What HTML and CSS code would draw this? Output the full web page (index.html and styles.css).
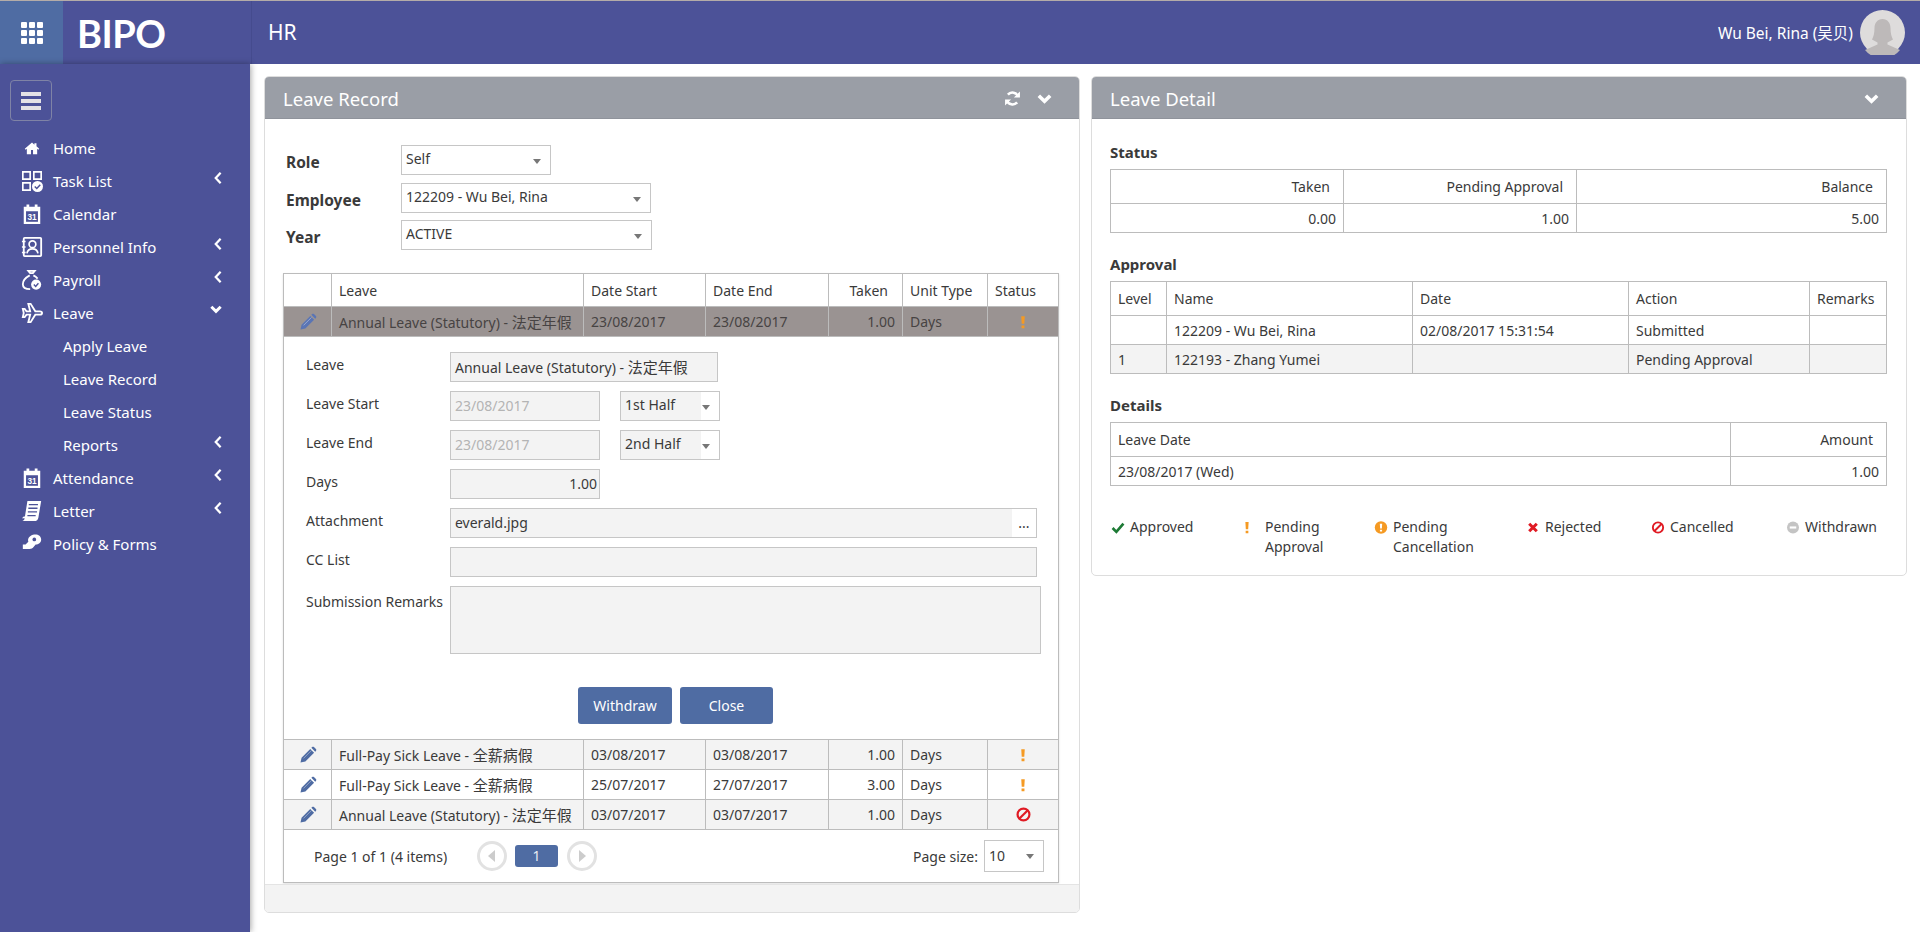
FILE: index.html
```html
<!DOCTYPE html>
<html lang="en">
<head>
    <meta charset="UTF-8">
    <meta name="viewport" content="width=device-width, initial-scale=1.0">
    <title>BIPO HR - Leave Record</title>
    <link rel="stylesheet" href="styles.css">
</head>
<body>
    <svg class="icon-defs" aria-hidden="true">
        <symbol id="i-pencil" viewBox="0 0 24 24"><path d="M2 22l1.400-6.500L15 3.900l5.100 5.100L8.500 20.600zM16.500 2.400l1-1c.7-.7 1.700-.7 2.400 0l2.700 2.700c.7.7.7 1.700 0 2.400l-1 1z"/><path class="pencil-line" d="M6 16.500L16.500 6"/></symbol>
        <symbol id="i-bang" viewBox="0 0 10 24"><path d="M2 2h6l-.8 13H2.800zM2.500 18h5v4.500h-5z"/></symbol>
        <symbol id="i-ban" viewBox="0 0 24 24"><circle cx="12" cy="12" r="9.500" fill="none" stroke="currentColor" stroke-width="3.500"/><path d="M5.500 18.500l13-13" stroke="currentColor" stroke-width="3.500"/></symbol>
        <symbol id="i-down" viewBox="0 0 24 24"><path d="M4 8l8 8 8-8" fill="none" stroke="currentColor" stroke-width="5"/></symbol>
        <symbol id="i-left" viewBox="0 0 12 24"><path d="M9.500 5L3 12l6.500 7" fill="none" stroke="currentColor" stroke-width="3"/></symbol>
    </svg>

    <header class="topbar">
        <div class="apps-btn">
            <svg width="22" height="22" viewBox="0 0 22 22" fill="#fff"><rect width="6" height="6" rx="1"/><rect x="8" width="6" height="6" rx="1"/><rect x="16" width="6" height="6" rx="1"/><rect y="8" width="6" height="6" rx="1"/><rect x="8" y="8" width="6" height="6" rx="1"/><rect x="16" y="8" width="6" height="6" rx="1"/><rect y="16" width="6" height="6" rx="1"/><rect x="8" y="16" width="6" height="6" rx="1"/><rect x="16" y="16" width="6" height="6" rx="1"/></svg>
        </div>
        <div class="logo">BIPO</div>
        <div class="module-name">HR</div>
        <div class="user-box">
            <span>Wu Bei, Rina (吴贝)</span>
            <svg class="avatar" width="45" height="45" viewBox="0 0 45 45"><circle cx="22.500" cy="22.500" r="22.500" fill="#dedcdc"/><path fill="#bdb9b9" d="M22.500 9c5 0 8 4 8 9 0 5 1 9 2.500 11.500l-5.500 3v2L40 40a22.500 22.500 0 0 1-35 0l12.500-5.500v-2l-5.500-3C13.500 27 14.500 23 14.500 18c0-5 3-9 8-9z"/></svg>
        </div>
    </header>

    <div class="layout">
        <aside class="sidebar">
            <button class="menu-toggle" type="button">
                <svg width="20" height="18" viewBox="0 0 20 18" fill="#e4e2e6"><rect width="20" height="4" y="0"/><rect width="20" height="4" y="7"/><rect width="20" height="4" y="14"/></svg>
            </button>
            <ul class="nav">
                <li><svg class="nav-icon" viewBox="-4 -4 32 32"><path fill="#fff" d="M12 4L1.500 13l1.300 1.500L4.500 13v8h6v-6h3v6h6v-8l1.700 1.500 1.300-1.500-4-3.400V5h-3v2.100z"/></svg>Home</li>
                <li><svg class="nav-icon" viewBox="0 0 24 24"><path fill="none" stroke="#fff" stroke-width="1.800" d="M2 2h8v8H2zM14 2h8v8h-8zM2 14h8v8H2z"/><circle cx="18" cy="18" r="6" fill="#fff"/><path fill="none" stroke="#4c5298" stroke-width="1.600" d="M15 18l2.200 2.200L21 16"/></svg>Task List<svg class="nav-caret"><use href="#i-left"/></svg></li>
                <li><svg class="nav-icon" viewBox="0 0 24 24"><path fill="#fff" d="M3 4h3V1.500h3V4h6V1.500h3V4h3v19H3z"/><rect x="5.500" y="9" width="13" height="11.500" fill="#4c5298"/><text x="12" y="18.500" class="cal-day">31</text></svg>Calendar</li>
                <li><svg class="nav-icon" viewBox="0 0 24 24"><rect x="3" y="2" width="19" height="20" rx="1" fill="none" stroke="#fff" stroke-width="2"/><path stroke="#fff" stroke-width="1.800" d="M1 6h4M1 12h4M1 18h4"/><circle cx="12.500" cy="9" r="3.700" fill="none" stroke="#fff" stroke-width="1.800"/><path fill="none" stroke="#fff" stroke-width="1.800" d="M6.500 19c.5-3.500 3-5 6-5s5.500 1.500 6 5"/></svg>Personnel Info<svg class="nav-caret"><use href="#i-left"/></svg></li>
                <li><svg class="nav-icon" viewBox="0 0 24 24"><path fill="none" stroke="#fff" stroke-width="2" d="M8 2l2 2.500h3l2-2.500zM9.500 7C5 9.500 2 13 2 16.500 2 20.500 5.500 22 10 22M13.500 7c2 1 3.500 2.200 4.600 3.500"/><circle cx="16.500" cy="17" r="5.500" fill="#fff"/><path fill="none" stroke="#4c5298" stroke-width="1.500" d="M14 17l2 2 3-3.500"/></svg>Payroll<svg class="nav-caret"><use href="#i-left"/></svg></li>
                <li><svg class="nav-icon" viewBox="0 0 24 24"><path fill="none" stroke="#fff" stroke-width="2" d="M23 12c0-1-1.200-1.800-2.400-1.800h-5L10.500 2H8l2 8.200H6L4 7.500H2l1 4.500-1 4.500h2l2-2.700h4L8 22h2.500l5.100-8.200h5c1.200 0 2.400-.8 2.400-1.800z"/></svg>Leave<svg class="nav-caret nav-caret-open"><use href="#i-down"/></svg></li>
                <li class="sub">Apply Leave</li>
                <li class="sub">Leave Record</li>
                <li class="sub">Leave Status</li>
                <li class="sub">Reports<svg class="nav-caret"><use href="#i-left"/></svg></li>
                <li><svg class="nav-icon" viewBox="0 0 24 24"><path fill="#fff" d="M3 4h3V1.500h3V4h6V1.500h3V4h3v19H3z"/><rect x="5.500" y="9" width="13" height="11.500" fill="#4c5298"/><text x="12" y="18.500" class="cal-day">31</text></svg>Attendance<svg class="nav-caret"><use href="#i-left"/></svg></li>
                <li><svg class="nav-icon" viewBox="0 0 24 24"><path fill="#fff" d="M7 1h15l-3 18c-.3 2.500-2 4-4.500 4H1.500c1.500-.5 2.300-1.600 2.500-3H1l2-2h1.300z"/><path stroke="#4c5298" stroke-width="1.500" d="M8.500 5h10M8 9h10M7.500 13h10M7 17h9"/></svg>Letter<svg class="nav-caret"><use href="#i-left"/></svg></li>
                <li><svg class="nav-icon" viewBox="0 0 24 24"><path fill="#fff" d="M13 2c4-1.500 9 .5 9 5 0 3.500-3 5.500-6 5.500l-3 3.500c-1.500 1.200-3 1.500-5 1.500H2v-5h3l3-3C7 6 9 3.500 13 2z"/><circle cx="14.500" cy="7" r="2" fill="#4c5298"/></svg>Policy &amp; Forms</li>
            </ul>
        </aside>

        <main class="content">
            <section class="panel">
                <div class="panel-head">
                    <h2>Leave Record</h2>
                    <svg class="head-icon" viewBox="0 0 24 24"><path fill="none" stroke="currentColor" stroke-width="3.500" d="M20 9.500A8.500 8.500 0 0 0 5.500 6.500M4 14.500a8.500 8.500 0 0 0 14.500 3"/><path fill="currentColor" d="M22.500 2v8.500H14zM1.500 22v-8.500H10z"/></svg>
                    <svg class="head-icon"><use href="#i-down"/></svg>
                </div>
                <div class="panel-body">
                    <div class="filter-form">
                        <div class="filter-row"><label>Role</label><div class="select select-role">Self</div></div>
                        <div class="filter-row"><label>Employee</label><div class="select select-emp">122209 - Wu Bei, Rina</div></div>
                        <div class="filter-row"><label>Year</label><div class="select select-year">ACTIVE</div></div>
                    </div>

                    <div class="grid">
                        <table class="grid-table">
                            <colgroup><col class="c-edit"><col class="c-leave"><col class="c-start"><col class="c-end"><col class="c-taken"><col class="c-unit"><col class="c-status"></colgroup>
                            <thead>
                                <tr><th></th><th>Leave</th><th>Date Start</th><th>Date End</th><th class="num">Taken</th><th>Unit Type</th><th>Status</th></tr>
                            </thead>
                            <tbody>
                                <tr class="row-selected">
                                    <td class="center"><svg class="pencil"><use href="#i-pencil"/></svg></td>
                                    <td>Annual Leave (Statutory) - <span class="cjk">法定年假</span></td><td>23/08/2017</td><td>23/08/2017</td><td class="num">1.00</td><td>Days</td>
                                    <td class="center"><svg class="st-bang"><use href="#i-bang"/></svg></td>
                                </tr>
                                <tr>
                                    <td colspan="7" class="detail-cell">
                                        <div class="detail-form">
                                            <label>Leave</label>
                                            <div class="field"><div class="input w-leave">Annual Leave (Statutory) - <span class="cjk">法定年假</span></div></div>
                                            <label>Leave Start</label>
                                            <div class="field"><div class="input w-date muted">23/08/2017</div><div class="select half">1st Half</div></div>
                                            <label>Leave End</label>
                                            <div class="field"><div class="input w-date muted">23/08/2017</div><div class="select half">2nd Half</div></div>
                                            <label>Days</label>
                                            <div class="field"><div class="input w-date right">1.00</div></div>
                                            <label>Attachment</label>
                                            <div class="field"><div class="input w-wide attach">everald.jpg<span class="browse">...</span></div></div>
                                            <label>CC List</label>
                                            <div class="field"><div class="input w-wide"></div></div>
                                            <label class="label-remarks">Submission Remarks</label>
                                            <div class="field"><div class="input textarea"></div></div>
                                        </div>
                                        <div class="detail-actions">
                                            <button class="btn btn-withdraw" type="button">Withdraw</button>
                                            <button class="btn btn-close" type="button">Close</button>
                                        </div>
                                    </td>
                                </tr>
                                <tr class="row-alt">
                                    <td class="center"><svg class="pencil"><use href="#i-pencil"/></svg></td>
                                    <td>Full-Pay Sick Leave - <span class="cjk">全薪病假</span></td><td>03/08/2017</td><td>03/08/2017</td><td class="num">1.00</td><td>Days</td>
                                    <td class="center"><svg class="st-bang"><use href="#i-bang"/></svg></td>
                                </tr>
                                <tr>
                                    <td class="center"><svg class="pencil"><use href="#i-pencil"/></svg></td>
                                    <td>Full-Pay Sick Leave - <span class="cjk">全薪病假</span></td><td>25/07/2017</td><td>27/07/2017</td><td class="num">3.00</td><td>Days</td>
                                    <td class="center"><svg class="st-bang"><use href="#i-bang"/></svg></td>
                                </tr>
                                <tr class="row-alt">
                                    <td class="center"><svg class="pencil"><use href="#i-pencil"/></svg></td>
                                    <td>Annual Leave (Statutory) - <span class="cjk">法定年假</span></td><td>03/07/2017</td><td>03/07/2017</td><td class="num">1.00</td><td>Days</td>
                                    <td class="center"><svg class="st-ban"><use href="#i-ban"/></svg></td>
                                </tr>
                            </tbody>
                        </table>
                        <div class="pager">
                            <span class="pager-info">Page 1 of 1 (4 items)</span>
                            <span class="pager-arrow"><svg width="8" height="12" viewBox="0 0 8 12"><path d="M7 0v12L0 6z"/></svg></span>
                            <span class="pager-num">1</span>
                            <span class="pager-arrow"><svg width="8" height="12" viewBox="0 0 8 12"><path d="M1 0v12l7-6z"/></svg></span>
                            <span class="pager-size">Page size:</span>
                            <div class="select select-size">10</div>
                        </div>
                    </div>
                </div>
                <div class="panel-foot"></div>
            </section>

            <section class="panel panel-detail">
                <div class="panel-head">
                    <h2>Leave Detail</h2>
                    <svg class="head-icon"><use href="#i-down"/></svg>
                </div>
                <div class="panel-body">
                    <h3>Status</h3>
                    <table class="info-table table-status">
                        <tr><th class="num">Taken</th><th class="num">Pending Approval</th><th class="num">Balance</th></tr>
                        <tr><td class="num">0.00</td><td class="num">1.00</td><td class="num">5.00</td></tr>
                    </table>
                    <h3>Approval</h3>
                    <table class="info-table table-approval">
                        <tr><th>Level</th><th>Name</th><th>Date</th><th>Action</th><th>Remarks</th></tr>
                        <tr><td></td><td>122209 - Wu Bei, Rina</td><td>02/08/2017 15:31:54</td><td>Submitted</td><td></td></tr>
                        <tr class="row-alt"><td>1</td><td>122193 - Zhang Yumei</td><td></td><td>Pending Approval</td><td></td></tr>
                    </table>
                    <h3>Details</h3>
                    <table class="info-table table-days">
                        <tr><th>Leave Date</th><th class="num">Amount</th></tr>
                        <tr><td>23/08/2017 (Wed)</td><td class="num">1.00</td></tr>
                    </table>
                    <div class="legend">
                        <div class="legend-item"><svg class="legend-icon lg-green" viewBox="0 0 24 24"><path d="M2 13l7 7L22 5" fill="none" stroke="currentColor" stroke-width="5"/></svg><span>Approved</span></div>
                        <div class="legend-item legend-item-wide"><svg class="legend-icon lg-orange"><use href="#i-bang"/></svg><span>Pending Approval</span></div>
                        <div class="legend-item"><svg class="legend-icon lg-orange" viewBox="0 0 24 24"><circle cx="12" cy="12" r="11.500"/><path fill="#fff" d="M9.800 5h4.400l-.6 9h-3.200zM10 16h4v3.500h-4z"/></svg><span>Pending Cancellation</span></div>
                        <div class="legend-item"><svg class="legend-icon lg-red" viewBox="0 0 24 24"><path d="M5 5l14 14M19 5L5 19" stroke="currentColor" stroke-width="5.500"/></svg><span>Rejected</span></div>
                        <div class="legend-item"><svg class="legend-icon lg-red"><use href="#i-ban"/></svg><span>Cancelled</span></div>
                        <div class="legend-item"><svg class="legend-icon lg-gray" viewBox="0 0 24 24"><circle cx="12" cy="12" r="11"/><rect x="6" y="10" width="12" height="4" fill="#fff"/></svg><span>Withdrawn</span></div>
                    </div>
                </div>
            </section>
        </main>
    </div>
</body>
</html>
```

FILE: styles.css
```css
:root {
    --nav-bg: #4c5298;
    --blue: #4f6ca3;
    --panel-head: #9a9ea6;
    --line: #bcbcbc;
    --input-line: #c6c6c6;
    --soft: #f3f3f3;
    --text: #3a3a3a;
}

html, body {
    height: 100%;
    overflow: hidden;
}

body {
    margin: 0;
    font-family: 'Noto Sans', 'Noto Sans CJK SC', sans-serif;
    font-size: 14px;
    color: var(--text);
    background: #fff;
}

.icon-defs {
    position: absolute;
    width: 0;
    height: 0;
}

.cal-day {
    fill: #fff;
    font-family: 'Liberation Sans', sans-serif;
    font-size: 9px;
    font-weight: 700;
    text-anchor: middle;
}

.cjk {
    font-size: 15px;
}

/* top bar */
.topbar {
    height: 64px;
    box-sizing: border-box;
    display: flex;
    align-items: center;
    background: var(--nav-bg);
    border-top: 1px solid #b4aca8;
    color: #fff;
}

.apps-btn {
    width: 63px;
    height: 63px;
    display: flex;
    align-items: center;
    justify-content: center;
    background: #4f6ca3;
}

.logo {
    width: 188px;
    box-sizing: border-box;
    padding-left: 14px;
    font-family: 'Lato', sans-serif;
    font-size: 38px;
    font-weight: 700;
    letter-spacing: -0.5px;
}

.module-name {
    height: 63px;
    line-height: 63px;
    padding-left: 16px;
    font-size: 21px;
    border-left: 1px solid #454b8e;
}

.user-box {
    margin-left: auto;
    margin-right: 15px;
    display: flex;
    align-items: center;
    gap: 7px;
    font-size: 15.5px;
}

.avatar {
    display: block;
}

/* side menu */
.layout {
    display: flex;
    height: 868px;
}

.sidebar {
    width: 250px;
    flex: none;
    box-sizing: border-box;
    padding-top: 16px;
    background: var(--nav-bg);
    color: #fff;
    font-size: 15px;
    box-shadow: 1px 0 6px rgba(0,0,0,0.35);
}

.menu-toggle {
    display: flex;
    align-items: center;
    justify-content: center;
    width: 42px;
    height: 41px;
    margin: 0 0 10px 10px;
    padding: 0;
    background: transparent;
    border: 1px solid #7f83a6;
    border-radius: 4px;
}

.nav {
    list-style: none;
    margin: 0;
    padding: 0;
}

.nav li {
    height: 33px;
    display: flex;
    align-items: center;
    padding: 0 27px 0 21px;
    white-space: nowrap;
}

.nav li.sub {
    padding-left: 63px;
}

.nav-icon {
    width: 22px;
    height: 22px;
    margin-right: 10px;
    flex: none;
}

.nav-caret {
    width: 10px;
    height: 18px;
    margin: -6px 0 0 auto;
    color: #fff;
}

.nav-caret-open {
    width: 14px;
    height: 14px;
    margin-top: -8px;
}

/* panels */
.content {
    flex: 1;
    display: grid;
    grid-template-columns: 816px 816px;
    column-gap: 11px;
    align-items: start;
    padding: 12px 13px 0 14px;
}

.panel {
    border: 1px solid #ddd;
    border-radius: 5px;
    overflow: hidden;
}

.panel-head {
    height: 42px;
    box-sizing: border-box;
    display: flex;
    align-items: center;
    gap: 15px;
    padding: 2px 26px 0 18px;
    background: var(--panel-head);
    border-bottom: 1px solid #8f939b;
    color: #fff;
}

.panel-head h2 {
    flex: 1;
    margin: 0;
    font-size: 18.5px;
    font-weight: 400;
}

.head-icon {
    width: 17px;
    height: 17px;
    color: #fff;
}

.panel-body {
    padding: 26px 20px 0 18px;
}

.panel-foot {
    height: 27px;
    margin-top: 1px;
    background: var(--soft);
    border-top: 1px solid #e4e4e4;
}

/* filter form */
.filter-form {
    display: flex;
    flex-direction: column;
    gap: 7.5px;
    margin-bottom: 23px;
}

.filter-row {
    display: flex;
    height: 30px;
}

.filter-row label {
    width: 115px;
    padding: 0 0 0 3px;
    line-height: 34px;
    font-size: 15.5px;
    font-weight: 700;
}

.select {
    position: relative;
    height: 30px;
    box-sizing: border-box;
    padding-left: 4px;
    line-height: 26px;
    background: #fff;
    border: 1px solid var(--input-line);
}

.select::after {
    content: "";
    position: absolute;
    right: 9px;
    top: 13px;
    border: 4px solid transparent;
    border-top: 5px solid #777;
    border-bottom: 0;
}

.select-role { width: 150px; }
.select-emp { width: 250px; }
.select-year { width: 251px; }

/* grid */
.grid {
    width: 776px;
    box-sizing: border-box;
    border: 1px solid var(--line);
    box-shadow: 0 1px 2px rgba(0,0,0,0.12);
}

.grid-table {
    width: 100%;
    table-layout: fixed;
    border-spacing: 0;
}

.c-edit { width: 47px; }
.c-leave { width: 252px; }
.c-start { width: 122px; }
.c-end { width: 123px; }
.c-taken { width: 74px; }
.c-unit { width: 85px; }
.c-status { width: 71px; }

.grid-table th, .grid-table td {
    box-sizing: border-box;
    padding: 0 7px;
    height: 30px;
    font-weight: 400;
    text-align: left;
    white-space: nowrap;
    border-bottom: 1px solid var(--line);
    border-left: 1px solid var(--line);
}

.grid-table th {
    height: 33px;
}

.grid-table th:first-child, .grid-table td:first-child {
    border-left: 0;
}

.grid-table th.num {
    padding-right: 14px;
}

.num {
    text-align: right !important;
}

.center {
    text-align: center !important;
    padding: 0 !important;
}

.row-selected td {
    background: #9a9392;
    color: #474343;
}

.row-alt td {
    background: var(--soft);
}

.pencil {
    display: block;
    width: 18px;
    height: 18px;
    margin: 0 auto;
    fill: var(--blue);
}

.pencil-line {
    stroke: #fff;
    stroke-width: 1;
    fill: none;
    opacity: 0.5;
}

.row-selected .pencil {
    fill: #5a75b5;
}

.st-bang {
    display: block;
    width: 6px;
    height: 14px;
    margin: 0 auto;
    fill: #f59a23;
}

.st-ban {
    display: block;
    width: 15px;
    height: 15px;
    margin: 0 auto;
    color: #e01b24;
}

/* expanded row */
.grid-table td.detail-cell {
    height: auto;
    padding: 15px 0;
    border-left: 0;
}

.detail-form {
    display: grid;
    grid-template-columns: 144px 1fr;
    row-gap: 9px;
    padding-left: 22px;
}

.detail-form label {
    line-height: 26px;
}

.detail-form .label-remarks {
    padding-top: 3px;
}

.field {
    display: flex;
    gap: 20px;
}

.input {
    height: 30px;
    box-sizing: border-box;
    padding: 0 4px;
    line-height: 28px;
    background: var(--soft);
    border: 1px solid var(--input-line);
}

.w-leave { width: 268px; }
.w-date { width: 150px; }
.w-wide { width: 587px; }

.muted { color: #b4b4b4; }
.right { text-align: right; padding-right: 2px; }

.attach {
    display: flex;
    justify-content: space-between;
    padding-right: 0;
}

.browse {
    width: 24px;
    text-align: center;
    background: #fff;
}

.textarea {
    width: 591px;
    height: 68px;
}

.half {
    width: 100px;
    background: linear-gradient(to right, var(--soft) 80px, #fff 80px);
}

.detail-actions {
    display: flex;
    justify-content: center;
    gap: 8px;
    margin-top: 33px;
    padding-left: 9px;
}

.btn {
    height: 37px;
    background: var(--blue);
    color: #fff;
    font: inherit;
    border: 0;
    border-radius: 3px;
}

.btn-withdraw { width: 94px; }
.btn-close { width: 93px; }

/* pager */
.pager {
    height: 52px;
    display: flex;
    align-items: center;
    padding: 0 14px 0 30px;
}

.pager-info {
    width: 163px;
}

.pager-arrow {
    width: 30px;
    height: 30px;
    box-sizing: border-box;
    display: flex;
    align-items: center;
    justify-content: center;
    border: 3px solid #e2e2e2;
    border-radius: 50%;
    fill: #ccc;
}

.pager-num {
    width: 43px;
    height: 22px;
    margin: 0 9px 0 8px;
    line-height: 22px;
    text-align: center;
    color: #e8ecf4;
    background: var(--blue);
    border-radius: 3px;
}

.pager-size {
    margin: 0 6px 0 auto;
}

.select-size {
    width: 60px;
    height: 32px;
    line-height: 30px;
}

/* right panel */
.panel-detail .panel-body {
    padding: 23px 20px 18px 18px;
}

h3 {
    margin: 0 0 7px;
    font-size: 15px;
    line-height: 20px;
}

.info-table {
    width: 777px;
    table-layout: fixed;
    border-collapse: collapse;
    margin-bottom: 21px;
}

.info-table th, .info-table td {
    box-sizing: border-box;
    height: 29px;
    padding: 0 7px;
    font-weight: 400;
    text-align: left;
    border: 1px solid var(--line);
}

.info-table th {
    height: 34px;
}

.info-table th.num {
    padding-right: 13px;
}

.table-status th:nth-child(1) { width: 233px; }
.table-status th:nth-child(2) { width: 233px; }

.table-approval th:nth-child(1) { width: 56px; }
.table-approval th:nth-child(2) { width: 246px; }
.table-approval th:nth-child(3) { width: 216px; }
.table-approval th:nth-child(4) { width: 181px; }

.table-days th:nth-child(2) { width: 156px; }

.legend {
    display: grid;
    grid-template-columns: 129px 134px 152px 125px 135px 102px;
    margin-top: 31px;
    line-height: 20px;
}

.legend-item {
    display: flex;
    align-items: flex-start;
    gap: 4px;
}

.legend-item-wide {
    gap: 10px;
}

.legend-icon {
    width: 16px;
    height: 13px;
    flex: none;
    margin-top: 4px;
}

.lg-green { color: #1d7a35; }
.lg-orange { fill: #f59a23; }
.lg-red { color: #e01b24; }
.lg-gray { fill: #c4c4c4; }
```
